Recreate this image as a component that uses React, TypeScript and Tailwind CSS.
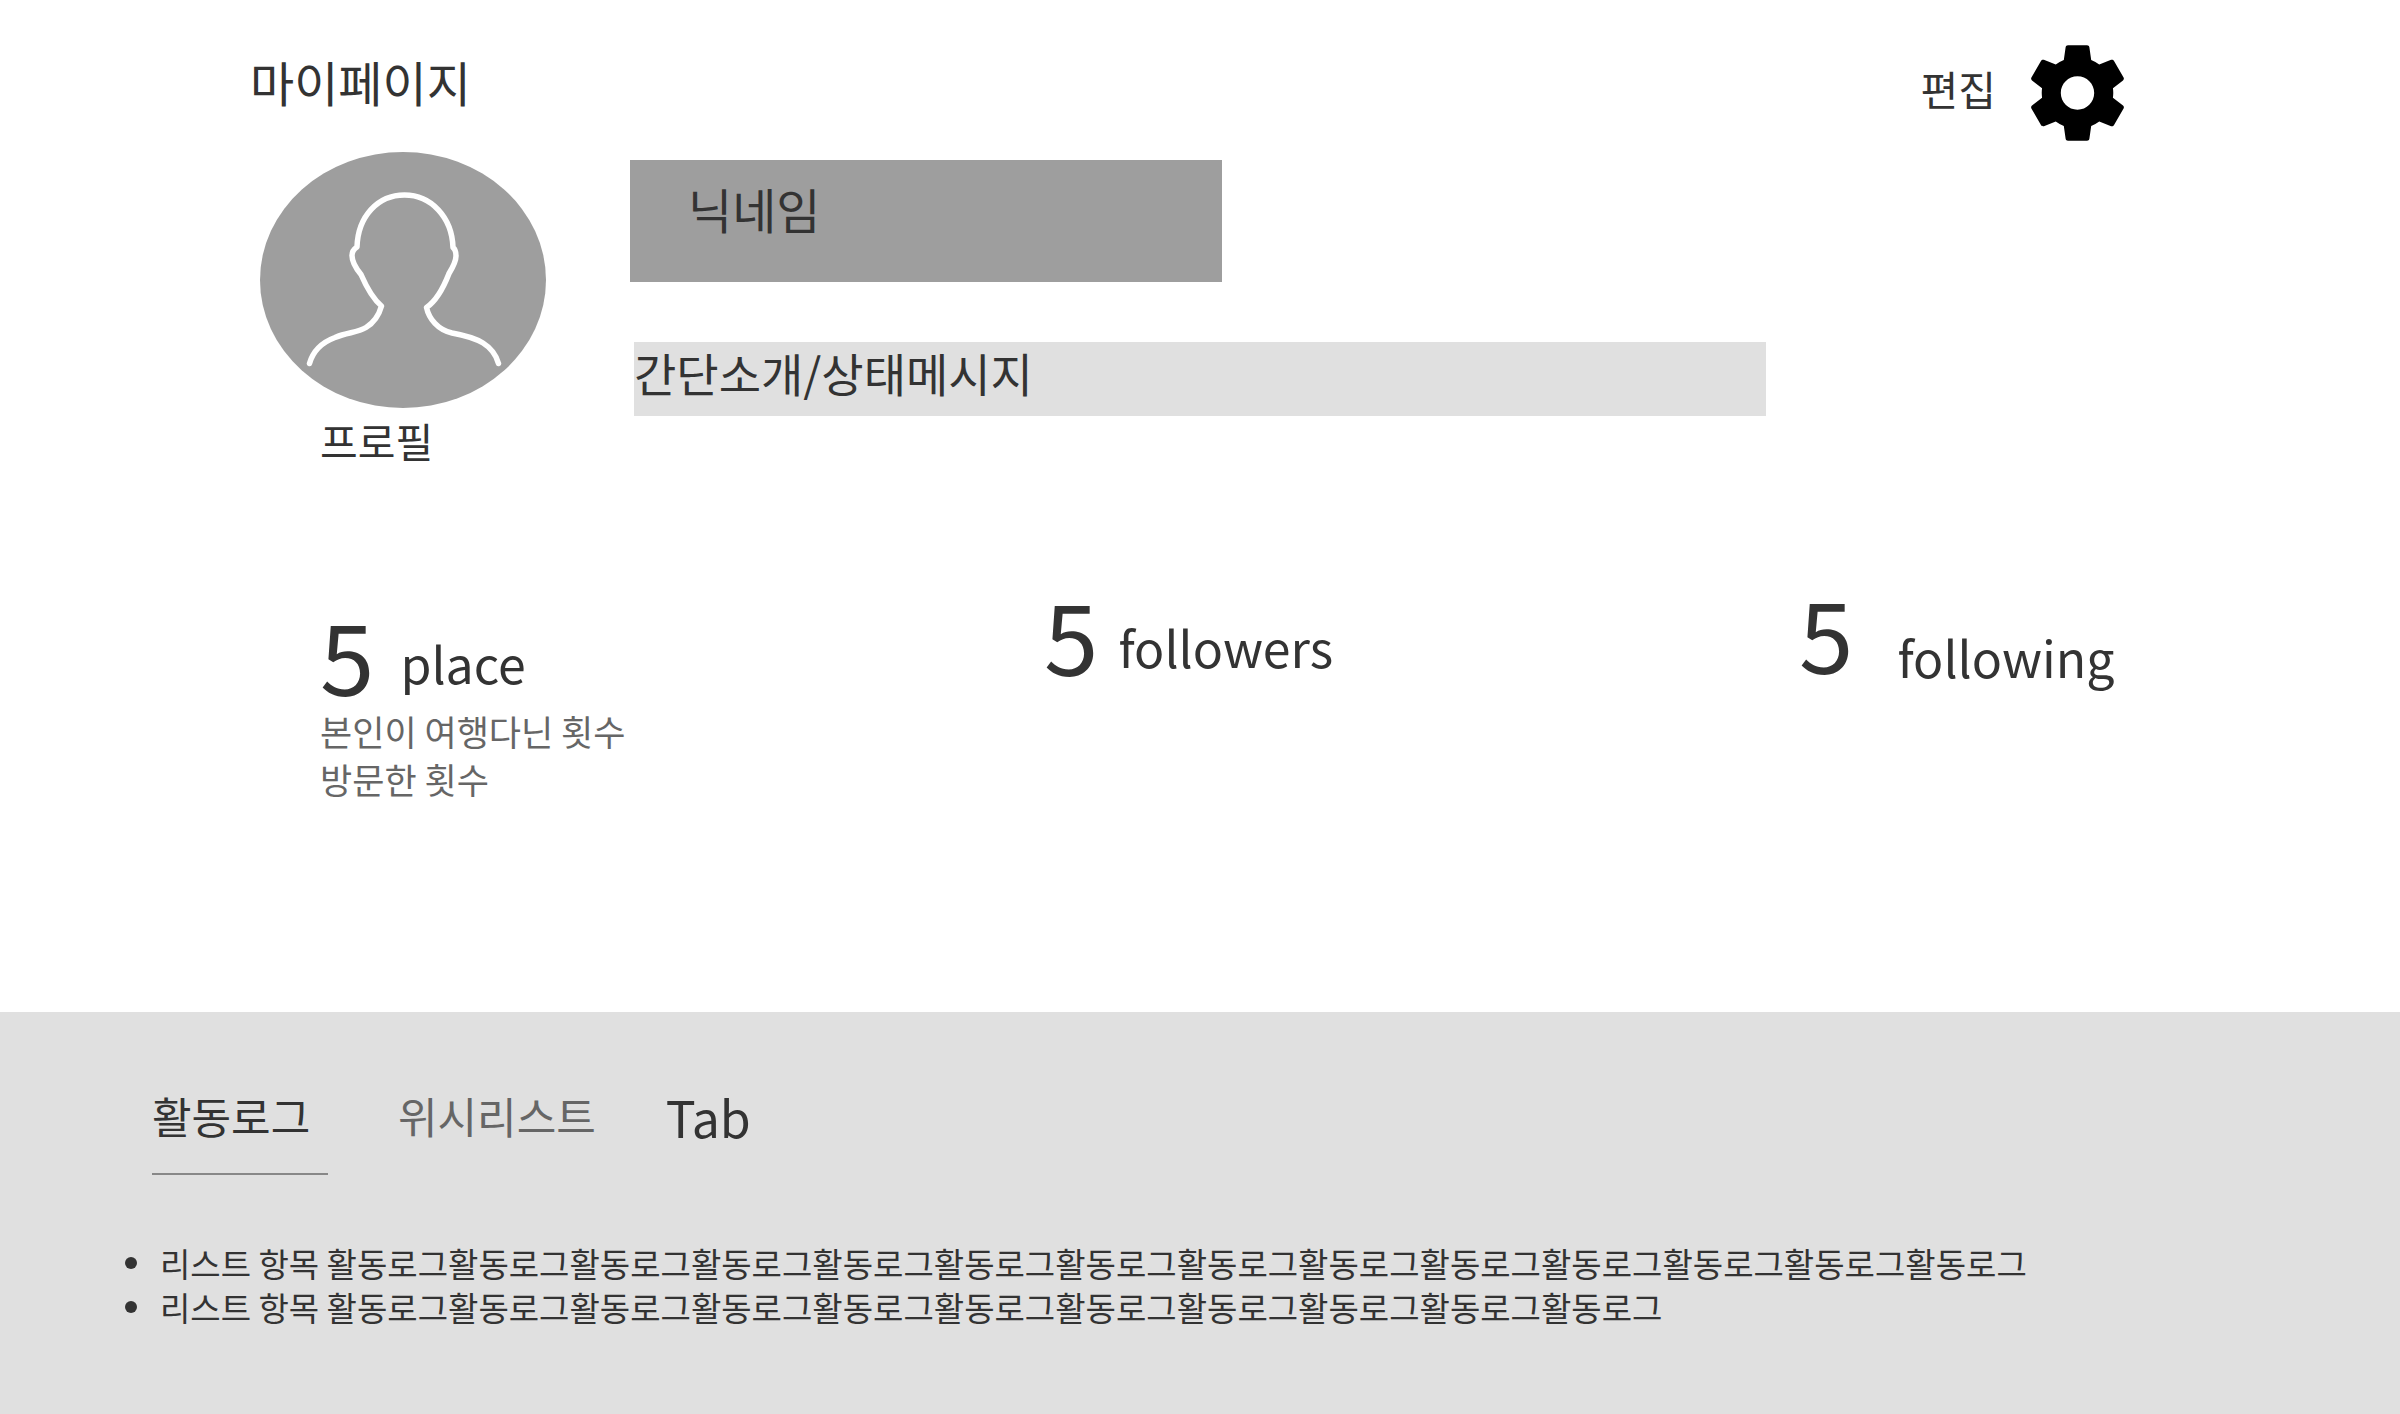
import { useState } from 'react';

const repeatLog = (times: number) => '리스트 항목 ' + '활동로그'.repeat(times);

const logs = [repeatLog(14), repeatLog(11)];

const tabs = [
  { label: '활동로그', className: 'min-w-44 text-[43px]' },
  { label: '위시리스트', className: 'text-[43px]' },
  { label: 'Tab', className: 'text-[50px] leading-[66px]' },
];

function GearIcon() {
  return (
    <svg viewBox="2.25 2 19.5 20" className="h-24 w-[93px] fill-black" aria-hidden="true">
      <path d="M19.43 12.98c.04-.32.07-.64.07-.98s-.03-.66-.07-.98l2.11-1.65c.19-.15.24-.42.12-.64l-2-3.46c-.12-.22-.39-.3-.61-.22l-2.49 1c-.52-.4-1.08-.73-1.69-.98l-.38-2.65C14.46 2.18 14.25 2 14 2h-4c-.25 0-.46.18-.49.42l-.38 2.65c-.61.25-1.17.59-1.69.98l-2.49-1c-.23-.09-.49 0-.61.22l-2 3.46c-.13.22-.07.49.12.64l2.11 1.65c-.04.32-.07.65-.07.98s.03.66.07.98l-2.11 1.65c-.19.15-.24.42-.12.64l2 3.46c.12.22.39.3.61.22l2.49-1c.52.4 1.08.73 1.69.98l.38 2.65c.03.24.24.42.49.42h4c.25 0 .46-.18.49-.42l.38-2.65c.61-.25 1.17-.59 1.69-.98l2.49 1c.23.09.49 0 .61-.22l2-3.46c.12-.22.07-.49-.12-.64l-2.11-1.65zM12 15.5c-1.93 0-3.5-1.57-3.5-3.5s1.57-3.5 3.5-3.5 3.5 1.57 3.5 3.5-1.57 3.5-3.5 3.5z" />
    </svg>
  );
}

function Avatar() {
  return (
    <svg viewBox="0 0 286 256" className="h-64 w-[286px]" role="img" aria-label="프로필">
      <ellipse cx="143" cy="128" rx="143" ry="128" fill="#9e9e9e" />
      <path
        d="M49.500 211.500C53 199 63 190 75 185.500C88 180 97 181 106 175.500C115 170 119 163 121.500 154C113 147 106 134 101 122.500C94 114 92 108 92 103.500C92 99 94 97 97 95C98 64 118 43 144.500 43C171 43 192 65 193 95.500C195 97 196 100 196 104C196 109 193 115 189 121.500C183 137 176 149 166.500 155.500C169 167 178 178 192 181C203 183 213 185 223 191C231 196 236 202 238.500 211.500"
        fill="none"
        stroke="#fff"
        strokeWidth="5.5"
        strokeLinecap="round"
        strokeLinejoin="round"
      />
    </svg>
  );
}

export default function App() {
  const [active, setActive] = useState(0);

  return (
    <div className="flex min-h-screen flex-col bg-white font-['Noto_Sans_CJK_KR',sans-serif] text-[#333]">
      <header className="flex items-start justify-between pt-[45px] pr-[276px] pl-[250px]">
        <h1 className="text-5xl leading-[72px]">마이페이지</h1>
        <div className="flex items-start gap-[35px]">
          <button type="button" className="pt-3 text-[41px] leading-[62px]">
            편집
          </button>
          <button type="button" aria-label="설정">
            <GearIcon />
          </button>
        </div>
      </header>

      <section className="flex items-start gap-21 pt-[11px] pr-[276px] pl-65">
        <figure className="shrink-0">
          <Avatar />
          <figcaption className="pl-[60px] text-[41px] leading-[64px]">프로필</figcaption>
        </figure>
        <div className="flex-1 pt-2">
          <h2 className="h-[122px] max-w-[592px] bg-[#9e9e9e] pt-3 pl-[58px] text-5xl leading-[72px]">닉네임</h2>
          <p className="mt-15 ml-1 h-[74px] max-w-[1132px] bg-[#e0e0e0] text-[46px] leading-[60px]">
            간단소개/상태메시지
          </p>
        </div>
      </section>

      <section className="grid grid-cols-[724fr_755fr_601fr] pt-28 pb-[209px] pl-80">
        <div className="pt-[22px]">
          <div className="flex items-start gap-[26px]">
            <span className="text-[98px] leading-[94px]">5</span>
            <span className="pt-6 text-[50px] leading-[64px]">place</span>
          </div>
          <p className="pt-[7px] text-[35px] leading-[48px] text-[#666]">
            본인이 여행다닌 횟수
            <br />
            방문한 횟수
          </p>
        </div>
        <div className="flex items-start gap-5 pt-0.5">
          <span className="text-[98px] leading-[94px]">5</span>
          <span className="pt-7 text-[50px] leading-[64px]">followers</span>
        </div>
        <div className="flex items-start gap-11">
          <span className="text-[98px] leading-[94px]">5</span>
          <span className="pt-10 text-[50px] leading-[64px]">following</span>
        </div>
      </section>

      <main className="grow bg-[#e0e0e0] pt-[71px] pb-16">
        <div role="tablist" className="flex items-stretch gap-[70px] pl-38 leading-[64px]">
          {tabs.map((tab, i) => (
            <button
              key={tab.label}
              type="button"
              role="tab"
              aria-selected={i === active}
              onClick={() => setActive(i)}
              className={`flex items-start border-b-2 pb-6 text-left ${tab.className} ${
                i === active ? 'border-[#888]' : 'border-transparent'
              } ${i === 1 ? 'text-[#666]' : ''}`}
            >
              {tab.label}
            </button>
          ))}
        </div>
        <ul className="pt-[66px] pl-[125px] text-[33px] leading-[44px]">
          {logs.map((log, i) => (
            <li key={i} className="flex items-center gap-[23px]">
              <span className="size-3 shrink-0 rounded-full bg-[#333]" />
              {log}
            </li>
          ))}
        </ul>
      </main>
    </div>
  );
}
